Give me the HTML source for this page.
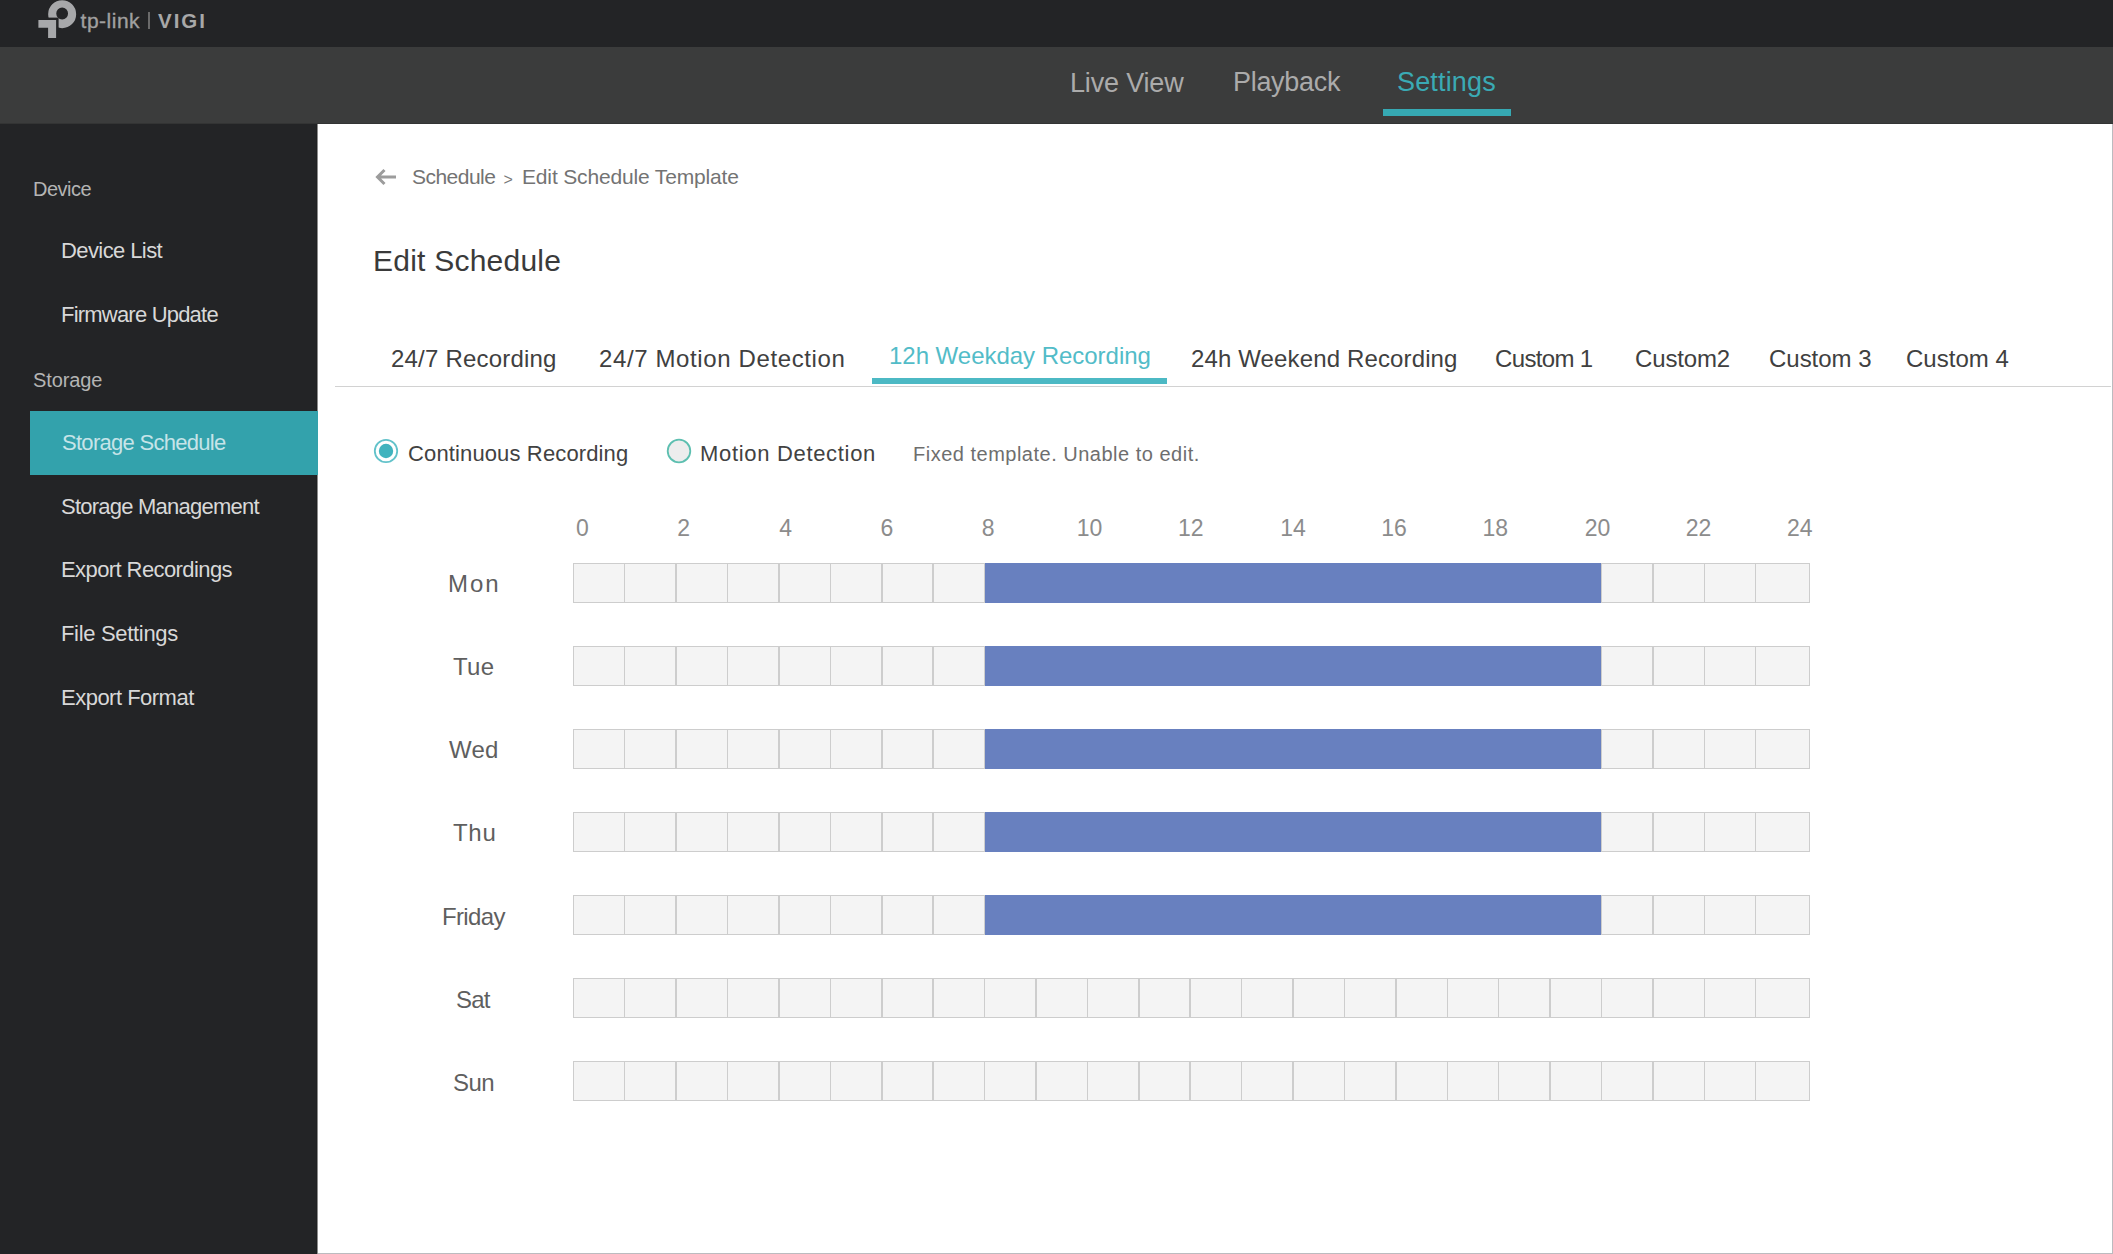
<!DOCTYPE html>
<html><head><meta charset="utf-8"><style>
*{margin:0;padding:0;box-sizing:border-box}
html,body{width:2113px;height:1254px;overflow:hidden;background:#fff;font-family:"Liberation Sans",sans-serif}
.a{position:absolute;white-space:nowrap;line-height:1}
#top{position:absolute;left:0;top:0;width:2113px;height:47px;background:#232426}
#nav{position:absolute;left:0;top:47px;width:2113px;height:77px;background:#3b3c3c}
#side{position:absolute;left:0;top:124px;width:317px;height:1130px;background:#232426}
#vline{position:absolute;left:2112px;top:124px;width:1px;height:1130px;background:#bbbbbf}
#hline{position:absolute;left:318px;top:1253px;width:1795px;height:1px;background:#bbbbbf}
.row{position:absolute;left:573px;width:1237px;height:40px;background:#f4f4f4;border:1.5px solid #cdcdcd}
.vl{position:absolute;top:0;width:1.5px;height:100%;background:#cdcdcd}
.blue{position:absolute;top:-1.5px;height:40px;background:#6880bf}
</style></head><body>
<div id="top"></div><div id="nav"></div><div id="side"></div><div id="vline"></div><div id="hline"></div>
<div class="a" style="left:316px;top:124px;width:1px;height:1130px;background:#202122"></div>
<div class="a" style="left:317px;top:124px;width:1px;height:1130px;background:#8c8c8c"></div>
<div class="a" style="left:0;top:123px;width:2113px;height:1px;background:#333434"></div>
<svg class="a" style="left:34px;top:0" width="46" height="40" viewBox="0 0 46 40">
<path fill="#a7a8aa" fill-rule="evenodd" d="M28.15 0.2 A14 14 0 1 1 28.15 28.2 A14 14 0 1 1 28.15 0.2 Z M28.15 7.6 A5.9 5.9 0 1 0 28.15 19.4 A5.9 5.9 0 1 0 28.15 7.6 Z"/>
<rect x="12" y="17.6" width="12.6" height="14" fill="#232426"/>
<path fill="#a7a8aa" d="M4.4 20 H22.1 V37.9 H14.1 V27.8 H4.4 Z"/>
</svg>
<div class="a" style="left:148.2px;top:11.5px;width:1.8px;height:17.5px;background:#6a6a6a"></div>
<div class="a" style="left:1383px;top:109px;width:128px;height:7px;background:#36a9b3"></div>
<div class="a" style="left:30px;top:411px;width:288px;height:64px;background:#33a2ac"></div>
<svg class="a" style="left:374.5px;top:166.7px" width="22" height="20" viewBox="0 0 22 20">
<path d="M2.5 10 H21 M9.5 3 L2.5 10 L9.5 17" stroke="#9c9c9c" stroke-width="3" fill="none"/></svg>
<div class="a" style="left:503.5px;top:171.5px;font-size:16px;color:#7a7a7a">&gt;</div>
<div class="a" style="left:335px;top:386px;width:1776px;height:1px;background:#d2d2d2"></div>
<div class="a" style="left:872px;top:378px;width:295px;height:6px;background:#4cb9c4"></div>
<svg class="a" style="left:372.4px;top:437.4px" width="28" height="28" viewBox="0 0 28 28">
<circle cx="14" cy="14" r="11.2" fill="#fff" stroke="#62c2ca" stroke-width="1.8"/><circle cx="14" cy="14" r="7.2" fill="#40b3be"/></svg>
<svg class="a" style="left:664.7px;top:437.4px" width="28" height="28" viewBox="0 0 28 28">
<circle cx="14" cy="14" r="11.3" fill="#ededed" stroke="#5dbfb0" stroke-width="1.8"/></svg>
<div class="row" style="top:563px"><div class="vl" style="left:49.96px"></div><div class="vl" style="left:101.37px"></div><div class="vl" style="left:152.78px"></div><div class="vl" style="left:204.19px"></div><div class="vl" style="left:255.60px"></div><div class="vl" style="left:307.01px"></div><div class="vl" style="left:358.42px"></div><div class="vl" style="left:409.83px"></div><div class="vl" style="left:461.24px"></div><div class="vl" style="left:512.65px"></div><div class="vl" style="left:564.06px"></div><div class="vl" style="left:615.47px"></div><div class="vl" style="left:666.88px"></div><div class="vl" style="left:718.29px"></div><div class="vl" style="left:769.70px"></div><div class="vl" style="left:821.11px"></div><div class="vl" style="left:872.52px"></div><div class="vl" style="left:923.93px"></div><div class="vl" style="left:975.34px"></div><div class="vl" style="left:1026.75px"></div><div class="vl" style="left:1078.16px"></div><div class="vl" style="left:1129.57px"></div><div class="vl" style="left:1180.98px"></div><div class="blue" style="left:410.58px;width:616.92px"></div></div>
<div class="row" style="top:646px"><div class="vl" style="left:49.96px"></div><div class="vl" style="left:101.37px"></div><div class="vl" style="left:152.78px"></div><div class="vl" style="left:204.19px"></div><div class="vl" style="left:255.60px"></div><div class="vl" style="left:307.01px"></div><div class="vl" style="left:358.42px"></div><div class="vl" style="left:409.83px"></div><div class="vl" style="left:461.24px"></div><div class="vl" style="left:512.65px"></div><div class="vl" style="left:564.06px"></div><div class="vl" style="left:615.47px"></div><div class="vl" style="left:666.88px"></div><div class="vl" style="left:718.29px"></div><div class="vl" style="left:769.70px"></div><div class="vl" style="left:821.11px"></div><div class="vl" style="left:872.52px"></div><div class="vl" style="left:923.93px"></div><div class="vl" style="left:975.34px"></div><div class="vl" style="left:1026.75px"></div><div class="vl" style="left:1078.16px"></div><div class="vl" style="left:1129.57px"></div><div class="vl" style="left:1180.98px"></div><div class="blue" style="left:410.58px;width:616.92px"></div></div>
<div class="row" style="top:729px"><div class="vl" style="left:49.96px"></div><div class="vl" style="left:101.37px"></div><div class="vl" style="left:152.78px"></div><div class="vl" style="left:204.19px"></div><div class="vl" style="left:255.60px"></div><div class="vl" style="left:307.01px"></div><div class="vl" style="left:358.42px"></div><div class="vl" style="left:409.83px"></div><div class="vl" style="left:461.24px"></div><div class="vl" style="left:512.65px"></div><div class="vl" style="left:564.06px"></div><div class="vl" style="left:615.47px"></div><div class="vl" style="left:666.88px"></div><div class="vl" style="left:718.29px"></div><div class="vl" style="left:769.70px"></div><div class="vl" style="left:821.11px"></div><div class="vl" style="left:872.52px"></div><div class="vl" style="left:923.93px"></div><div class="vl" style="left:975.34px"></div><div class="vl" style="left:1026.75px"></div><div class="vl" style="left:1078.16px"></div><div class="vl" style="left:1129.57px"></div><div class="vl" style="left:1180.98px"></div><div class="blue" style="left:410.58px;width:616.92px"></div></div>
<div class="row" style="top:812px"><div class="vl" style="left:49.96px"></div><div class="vl" style="left:101.37px"></div><div class="vl" style="left:152.78px"></div><div class="vl" style="left:204.19px"></div><div class="vl" style="left:255.60px"></div><div class="vl" style="left:307.01px"></div><div class="vl" style="left:358.42px"></div><div class="vl" style="left:409.83px"></div><div class="vl" style="left:461.24px"></div><div class="vl" style="left:512.65px"></div><div class="vl" style="left:564.06px"></div><div class="vl" style="left:615.47px"></div><div class="vl" style="left:666.88px"></div><div class="vl" style="left:718.29px"></div><div class="vl" style="left:769.70px"></div><div class="vl" style="left:821.11px"></div><div class="vl" style="left:872.52px"></div><div class="vl" style="left:923.93px"></div><div class="vl" style="left:975.34px"></div><div class="vl" style="left:1026.75px"></div><div class="vl" style="left:1078.16px"></div><div class="vl" style="left:1129.57px"></div><div class="vl" style="left:1180.98px"></div><div class="blue" style="left:410.58px;width:616.92px"></div></div>
<div class="row" style="top:895px"><div class="vl" style="left:49.96px"></div><div class="vl" style="left:101.37px"></div><div class="vl" style="left:152.78px"></div><div class="vl" style="left:204.19px"></div><div class="vl" style="left:255.60px"></div><div class="vl" style="left:307.01px"></div><div class="vl" style="left:358.42px"></div><div class="vl" style="left:409.83px"></div><div class="vl" style="left:461.24px"></div><div class="vl" style="left:512.65px"></div><div class="vl" style="left:564.06px"></div><div class="vl" style="left:615.47px"></div><div class="vl" style="left:666.88px"></div><div class="vl" style="left:718.29px"></div><div class="vl" style="left:769.70px"></div><div class="vl" style="left:821.11px"></div><div class="vl" style="left:872.52px"></div><div class="vl" style="left:923.93px"></div><div class="vl" style="left:975.34px"></div><div class="vl" style="left:1026.75px"></div><div class="vl" style="left:1078.16px"></div><div class="vl" style="left:1129.57px"></div><div class="vl" style="left:1180.98px"></div><div class="blue" style="left:410.58px;width:616.92px"></div></div>
<div class="row" style="top:978px"><div class="vl" style="left:49.96px"></div><div class="vl" style="left:101.37px"></div><div class="vl" style="left:152.78px"></div><div class="vl" style="left:204.19px"></div><div class="vl" style="left:255.60px"></div><div class="vl" style="left:307.01px"></div><div class="vl" style="left:358.42px"></div><div class="vl" style="left:409.83px"></div><div class="vl" style="left:461.24px"></div><div class="vl" style="left:512.65px"></div><div class="vl" style="left:564.06px"></div><div class="vl" style="left:615.47px"></div><div class="vl" style="left:666.88px"></div><div class="vl" style="left:718.29px"></div><div class="vl" style="left:769.70px"></div><div class="vl" style="left:821.11px"></div><div class="vl" style="left:872.52px"></div><div class="vl" style="left:923.93px"></div><div class="vl" style="left:975.34px"></div><div class="vl" style="left:1026.75px"></div><div class="vl" style="left:1078.16px"></div><div class="vl" style="left:1129.57px"></div><div class="vl" style="left:1180.98px"></div></div>
<div class="row" style="top:1061px"><div class="vl" style="left:49.96px"></div><div class="vl" style="left:101.37px"></div><div class="vl" style="left:152.78px"></div><div class="vl" style="left:204.19px"></div><div class="vl" style="left:255.60px"></div><div class="vl" style="left:307.01px"></div><div class="vl" style="left:358.42px"></div><div class="vl" style="left:409.83px"></div><div class="vl" style="left:461.24px"></div><div class="vl" style="left:512.65px"></div><div class="vl" style="left:564.06px"></div><div class="vl" style="left:615.47px"></div><div class="vl" style="left:666.88px"></div><div class="vl" style="left:718.29px"></div><div class="vl" style="left:769.70px"></div><div class="vl" style="left:821.11px"></div><div class="vl" style="left:872.52px"></div><div class="vl" style="left:923.93px"></div><div class="vl" style="left:975.34px"></div><div class="vl" style="left:1026.75px"></div><div class="vl" style="left:1078.16px"></div><div class="vl" style="left:1129.57px"></div><div class="vl" style="left:1180.98px"></div></div>
<div class="a t" id="sh1" style="left:33.00px;top:179.00px;font-size:20px;color:#b4b4b4;letter-spacing:-0.520px;">Device</div>
<div class="a t" id="si1" style="left:61.00px;top:240.15px;font-size:22px;color:#d8d8d8;letter-spacing:-0.590px;">Device List</div>
<div class="a t" id="si2" style="left:61.00px;top:304.15px;font-size:22px;color:#d8d8d8;letter-spacing:-0.793px;">Firmware Update</div>
<div class="a t" id="sh2" style="left:33.00px;top:370.00px;font-size:20px;color:#b4b4b4;letter-spacing:-0.116px;">Storage</div>
<div class="a t" id="si3" style="left:62.00px;top:432.15px;font-size:22px;color:#c6e4e8;letter-spacing:-0.708px;">Storage Schedule</div>
<div class="a t" id="si4" style="left:61.00px;top:496.15px;font-size:22px;color:#d8d8d8;letter-spacing:-0.770px;">Storage Management</div>
<div class="a t" id="si5" style="left:61.00px;top:559.15px;font-size:22px;color:#d8d8d8;letter-spacing:-0.586px;">Export Recordings</div>
<div class="a t" id="si6" style="left:61.00px;top:623.15px;font-size:22px;color:#d8d8d8;letter-spacing:-0.317px;">File Settings</div>
<div class="a t" id="si7" style="left:61.00px;top:687.15px;font-size:22px;color:#d8d8d8;letter-spacing:-0.508px;">Export Format</div>
<div class="a t" id="nv1" style="left:1070.00px;top:70.05px;font-size:27px;color:#ababab;letter-spacing:-0.175px;">Live View</div>
<div class="a t" id="nv2" style="left:1233.00px;top:69.05px;font-size:27px;color:#ababab;letter-spacing:-0.302px;">Playback</div>
<div class="a t" id="nv3" style="left:1397.00px;top:69.05px;font-size:27px;color:#3aaab4;letter-spacing:0.169px;">Settings</div>
<div class="a t" id="bc1" style="left:412.00px;top:166.15px;font-size:21px;color:#737373;letter-spacing:-0.529px;">Schedule</div>
<div class="a t" id="bc3" style="left:522.00px;top:166.15px;font-size:21px;color:#737373;letter-spacing:-0.157px;">Edit Schedule Template</div>
<div class="a t" id="ttl" style="left:373.00px;top:245.50px;font-size:30px;color:#3a3a3a;letter-spacing:0.234px;">Edit Schedule</div>
<div class="a t" id="tb1" style="left:391.00px;top:346.60px;font-size:24px;color:#404040;letter-spacing:0.207px;">24/7 Recording</div>
<div class="a t" id="tb2" style="left:599.00px;top:346.60px;font-size:24px;color:#404040;letter-spacing:0.620px;">24/7 Motion Detection</div>
<div class="a t" id="tb3" style="left:889.00px;top:343.60px;font-size:24px;color:#52bcc8;letter-spacing:-0.025px;">12h Weekday Recording</div>
<div class="a t" id="tb4" style="left:1191.00px;top:346.60px;font-size:24px;color:#404040;letter-spacing:0.135px;">24h Weekend Recording</div>
<div class="a t" id="tb5" style="left:1495.00px;top:346.60px;font-size:24px;color:#404040;letter-spacing:-0.642px;">Custom 1</div>
<div class="a t" id="tb6" style="left:1635.00px;top:346.60px;font-size:24px;color:#404040;letter-spacing:-0.151px;">Custom2</div>
<div class="a t" id="tb7" style="left:1769.00px;top:346.60px;font-size:24px;color:#404040;letter-spacing:-0.025px;">Custom 3</div>
<div class="a t" id="tb8" style="left:1906.00px;top:346.60px;font-size:24px;color:#404040;letter-spacing:0.026px;">Custom 4</div>
<div class="a t" id="rd1" style="left:408.00px;top:443.30px;font-size:22px;color:#424242;letter-spacing:0.132px;">Continuous Recording</div>
<div class="a t" id="rd2" style="left:700.00px;top:443.30px;font-size:22px;color:#424242;letter-spacing:0.681px;">Motion Detection</div>
<div class="a t" id="fx" style="left:913.00px;top:444.00px;font-size:20px;color:#6e6e6e;letter-spacing:0.500px;">Fixed template. Unable to edit.</div>
<div class="a t" id="dy0" style="left:448.00px;top:571.60px;font-size:24px;color:#5f5f5f;letter-spacing:2.000px;">Mon</div>
<div class="a t" id="dy1" style="left:453.00px;top:654.60px;font-size:24px;color:#5f5f5f;letter-spacing:0.300px;">Tue</div>
<div class="a t" id="dy2" style="left:449.00px;top:737.60px;font-size:24px;color:#5f5f5f;letter-spacing:0.250px;">Wed</div>
<div class="a t" id="dy3" style="left:453.00px;top:820.60px;font-size:24px;color:#5f5f5f;letter-spacing:0.700px;">Thu</div>
<div class="a t" id="dy4" style="left:442.00px;top:904.60px;font-size:24px;color:#5f5f5f;letter-spacing:-0.640px;">Friday</div>
<div class="a t" id="dy5" style="left:456.00px;top:987.60px;font-size:24px;color:#5f5f5f;letter-spacing:-0.750px;">Sat</div>
<div class="a t" id="dy6" style="left:453.00px;top:1070.60px;font-size:24px;color:#5f5f5f;letter-spacing:-0.500px;">Sun</div>
<div class="a t" id="nm0" style="left:576.00px;top:517.45px;font-size:23px;color:#8c8c8c;letter-spacing:0.000px;">0</div>
<div class="a t" id="nm1" style="left:677.20px;top:517.45px;font-size:23px;color:#8c8c8c;letter-spacing:0.000px;">2</div>
<div class="a t" id="nm2" style="left:779.30px;top:517.45px;font-size:23px;color:#8c8c8c;letter-spacing:0.000px;">4</div>
<div class="a t" id="nm3" style="left:880.50px;top:517.45px;font-size:23px;color:#8c8c8c;letter-spacing:0.000px;">6</div>
<div class="a t" id="nm4" style="left:981.70px;top:517.45px;font-size:23px;color:#8c8c8c;letter-spacing:0.000px;">8</div>
<div class="a t" id="nm5" style="left:1076.80px;top:517.45px;font-size:23px;color:#8c8c8c;letter-spacing:0.000px;">10</div>
<div class="a t" id="nm6" style="left:1178.00px;top:517.45px;font-size:23px;color:#8c8c8c;letter-spacing:0.000px;">12</div>
<div class="a t" id="nm7" style="left:1280.20px;top:517.45px;font-size:23px;color:#8c8c8c;letter-spacing:0.000px;">14</div>
<div class="a t" id="nm8" style="left:1381.30px;top:517.45px;font-size:23px;color:#8c8c8c;letter-spacing:0.000px;">16</div>
<div class="a t" id="nm9" style="left:1482.50px;top:517.45px;font-size:23px;color:#8c8c8c;letter-spacing:0.000px;">18</div>
<div class="a t" id="nm10" style="left:1584.70px;top:517.45px;font-size:23px;color:#8c8c8c;letter-spacing:0.000px;">20</div>
<div class="a t" id="nm11" style="left:1685.80px;top:517.45px;font-size:23px;color:#8c8c8c;letter-spacing:0.000px;">22</div>
<div class="a t" id="nm12" style="left:1787.00px;top:517.45px;font-size:23px;color:#8c8c8c;letter-spacing:0.000px;">24</div>
<div class="a t" id="lg1" style="left:80.60px;top:9.75px;font-size:21px;color:#a0a0a0;letter-spacing:0.500px;-webkit-text-stroke:0.35px #a0a0a0">tp-link</div>
<div class="a t" id="lg2" style="left:158.00px;top:11.18px;font-size:20.5px;color:#a8a8a8;letter-spacing:2.000px;font-weight:bold">VIGI</div>
</body></html>
